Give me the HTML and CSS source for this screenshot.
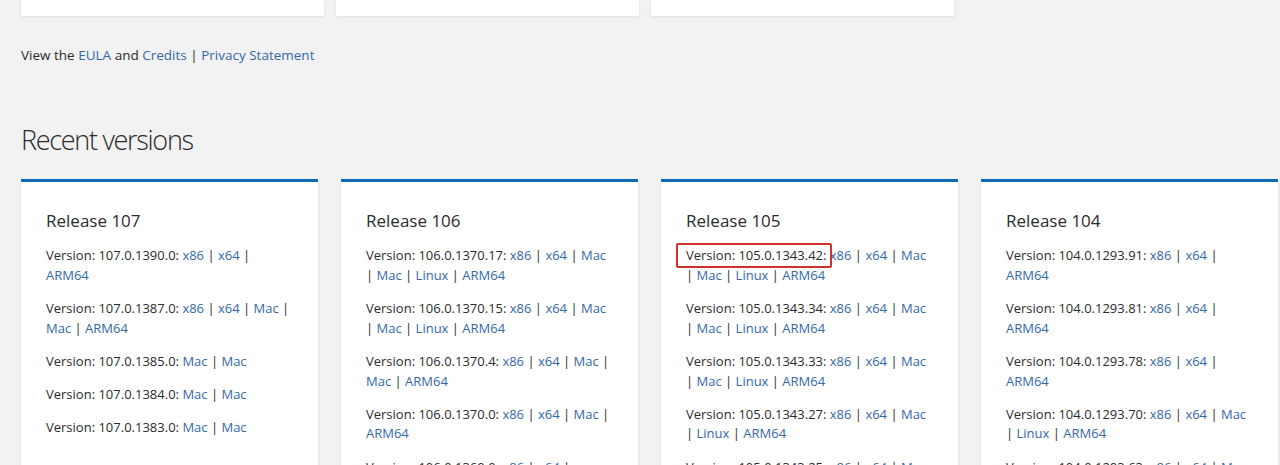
FILE: index.html
```html
<!DOCTYPE html>
<html lang="en">
<head>
<meta charset="utf-8">
<title>Recent versions</title>
<link rel="stylesheet" href="styles.css">
</head>
<body>
<div class="page">
  <div class="top-cards">
    <div class="top-card"></div>
    <div class="top-card"></div>
    <div class="top-card"></div>
  </div>

  <p class="legal">View the <a href="#">EULA</a> and <a href="#">Credits</a> | <a href="#">Privacy Statement</a></p>

  <h2 class="section-title">Recent versions</h2>

  <div class="releases">
    <div class="release-card">
      <h3 class="release-title">Release 107</h3>
      <p class="ver">Version: 107.0.1390.0: <a href="#">x86</a> | <a href="#">x64</a> | <a href="#">ARM64</a></p>
      <p class="ver">Version: 107.0.1387.0: <a href="#">x86</a> | <a href="#">x64</a> | <a href="#">Mac</a> | <a href="#">Mac</a> | <a href="#">ARM64</a></p>
      <p class="ver">Version: 107.0.1385.0: <a href="#">Mac</a> | <a href="#">Mac</a></p>
      <p class="ver">Version: 107.0.1384.0: <a href="#">Mac</a> | <a href="#">Mac</a></p>
      <p class="ver">Version: 107.0.1383.0: <a href="#">Mac</a> | <a href="#">Mac</a></p>
    </div>
    <div class="release-card">
      <h3 class="release-title">Release 106</h3>
      <p class="ver">Version: 106.0.1370.17: <a href="#">x86</a> | <a href="#">x64</a> | <a href="#">Mac</a> | <a href="#">Mac</a> | <a href="#">Linux</a> | <a href="#">ARM64</a></p>
      <p class="ver">Version: 106.0.1370.15: <a href="#">x86</a> | <a href="#">x64</a> | <a href="#">Mac</a> | <a href="#">Mac</a> | <a href="#">Linux</a> | <a href="#">ARM64</a></p>
      <p class="ver">Version: 106.0.1370.4: <a href="#">x86</a> | <a href="#">x64</a> | <a href="#">Mac</a> | <a href="#">Mac</a> | <a href="#">ARM64</a></p>
      <p class="ver">Version: 106.0.1370.0: <a href="#">x86</a> | <a href="#">x64</a> | <a href="#">Mac</a> | <a href="#">ARM64</a></p>
      <p class="ver">Version: 106.0.1369.0: <a href="#">x86</a> | <a href="#">x64</a> | <a href="#">ARM64</a></p>
    </div>
    <div class="release-card">
      <h3 class="release-title">Release 105</h3>
      <p class="ver"><span class="marked">Version: 105.0.1343.42:</span> <a href="#">x86</a> | <a href="#">x64</a> | <a href="#">Mac</a> | <a href="#">Mac</a> | <a href="#">Linux</a> | <a href="#">ARM64</a></p>
      <p class="ver">Version: 105.0.1343.34: <a href="#">x86</a> | <a href="#">x64</a> | <a href="#">Mac</a> | <a href="#">Mac</a> | <a href="#">Linux</a> | <a href="#">ARM64</a></p>
      <p class="ver">Version: 105.0.1343.33: <a href="#">x86</a> | <a href="#">x64</a> | <a href="#">Mac</a> | <a href="#">Mac</a> | <a href="#">Linux</a> | <a href="#">ARM64</a></p>
      <p class="ver">Version: 105.0.1343.27: <a href="#">x86</a> | <a href="#">x64</a> | <a href="#">Mac</a> | <a href="#">Linux</a> | <a href="#">ARM64</a></p>
      <p class="ver">Version: 105.0.1343.25: <a href="#">x86</a> | <a href="#">x64</a> | <a href="#">Mac</a> | <a href="#">Linux</a> | <a href="#">ARM64</a></p>
    </div>
    <div class="release-card">
      <h3 class="release-title">Release 104</h3>
      <p class="ver">Version: 104.0.1293.91: <a href="#">x86</a> | <a href="#">x64</a> | <a href="#">ARM64</a></p>
      <p class="ver">Version: 104.0.1293.81: <a href="#">x86</a> | <a href="#">x64</a> | <a href="#">ARM64</a></p>
      <p class="ver">Version: 104.0.1293.78: <a href="#">x86</a> | <a href="#">x64</a> | <a href="#">ARM64</a></p>
      <p class="ver">Version: 104.0.1293.70: <a href="#">x86</a> | <a href="#">x64</a> | <a href="#">Mac</a> | <a href="#">Linux</a> | <a href="#">ARM64</a></p>
      <p class="ver">Version: 104.0.1293.63: <a href="#">x86</a> | <a href="#">x64</a> | <a href="#">Mac</a> | <a href="#">Linux</a> | <a href="#">ARM64</a></p>
    </div>
  </div>
</div>
</body>
</html>
```
FILE: styles.css
```css
html, body {
  margin: 0;
  padding: 0;
  background: #f2f2f2;
  height: 100%;
  overflow: hidden;
}

body {
  font-family: "Open Sans", "Noto Sans", sans-serif;
  color: #2b2b2b;
}

a {
  color: #3369a8;
  text-decoration: none;
}

.page {
  padding: 0 2px 0 21px;
}

.top-cards {
  display: flex;
  gap: 12px;
}

.top-card {
  width: 303px;
  height: 16px;
  background: #fff;
  box-shadow: 0 1px 3px rgba(0, 0, 0, 0.09);
}

.legal {
  margin: 29px 0 0;
  font-size: 13.5px;
  line-height: 20px;
}

.section-title {
  margin: 57px 0 0;
  font-size: 27px;
  font-weight: 300;
  letter-spacing: -1.3px;
  line-height: 36px;
  color: #2b2b2b;
}

.releases {
  margin-top: 21px;
  display: flex;
  gap: 23px;
}

.release-card {
  flex: 0 0 297px;
  box-sizing: border-box;
  background: #fff;
  border-top: 3px solid #0f6cbd;
  padding: 27px 27px 40px 25px;
  box-shadow: 0 1px 3px rgba(0, 0, 0, 0.1);
}

.release-title {
  margin: 0 0 13px;
  font-size: 17px;
  font-weight: 400;
  line-height: 24px;
  color: #2b2b2b;
}

.ver {
  margin: 0 0 13.5px;
  font-size: 13px;
  line-height: 19.7px;
}

.marked {
  position: relative;
}

.marked::after {
  content: "";
  position: absolute;
  top: -3px;
  bottom: -4px;
  left: -10px;
  right: -6px;
  border: 2px solid #d2302c;
  border-radius: 2px;
}
```
